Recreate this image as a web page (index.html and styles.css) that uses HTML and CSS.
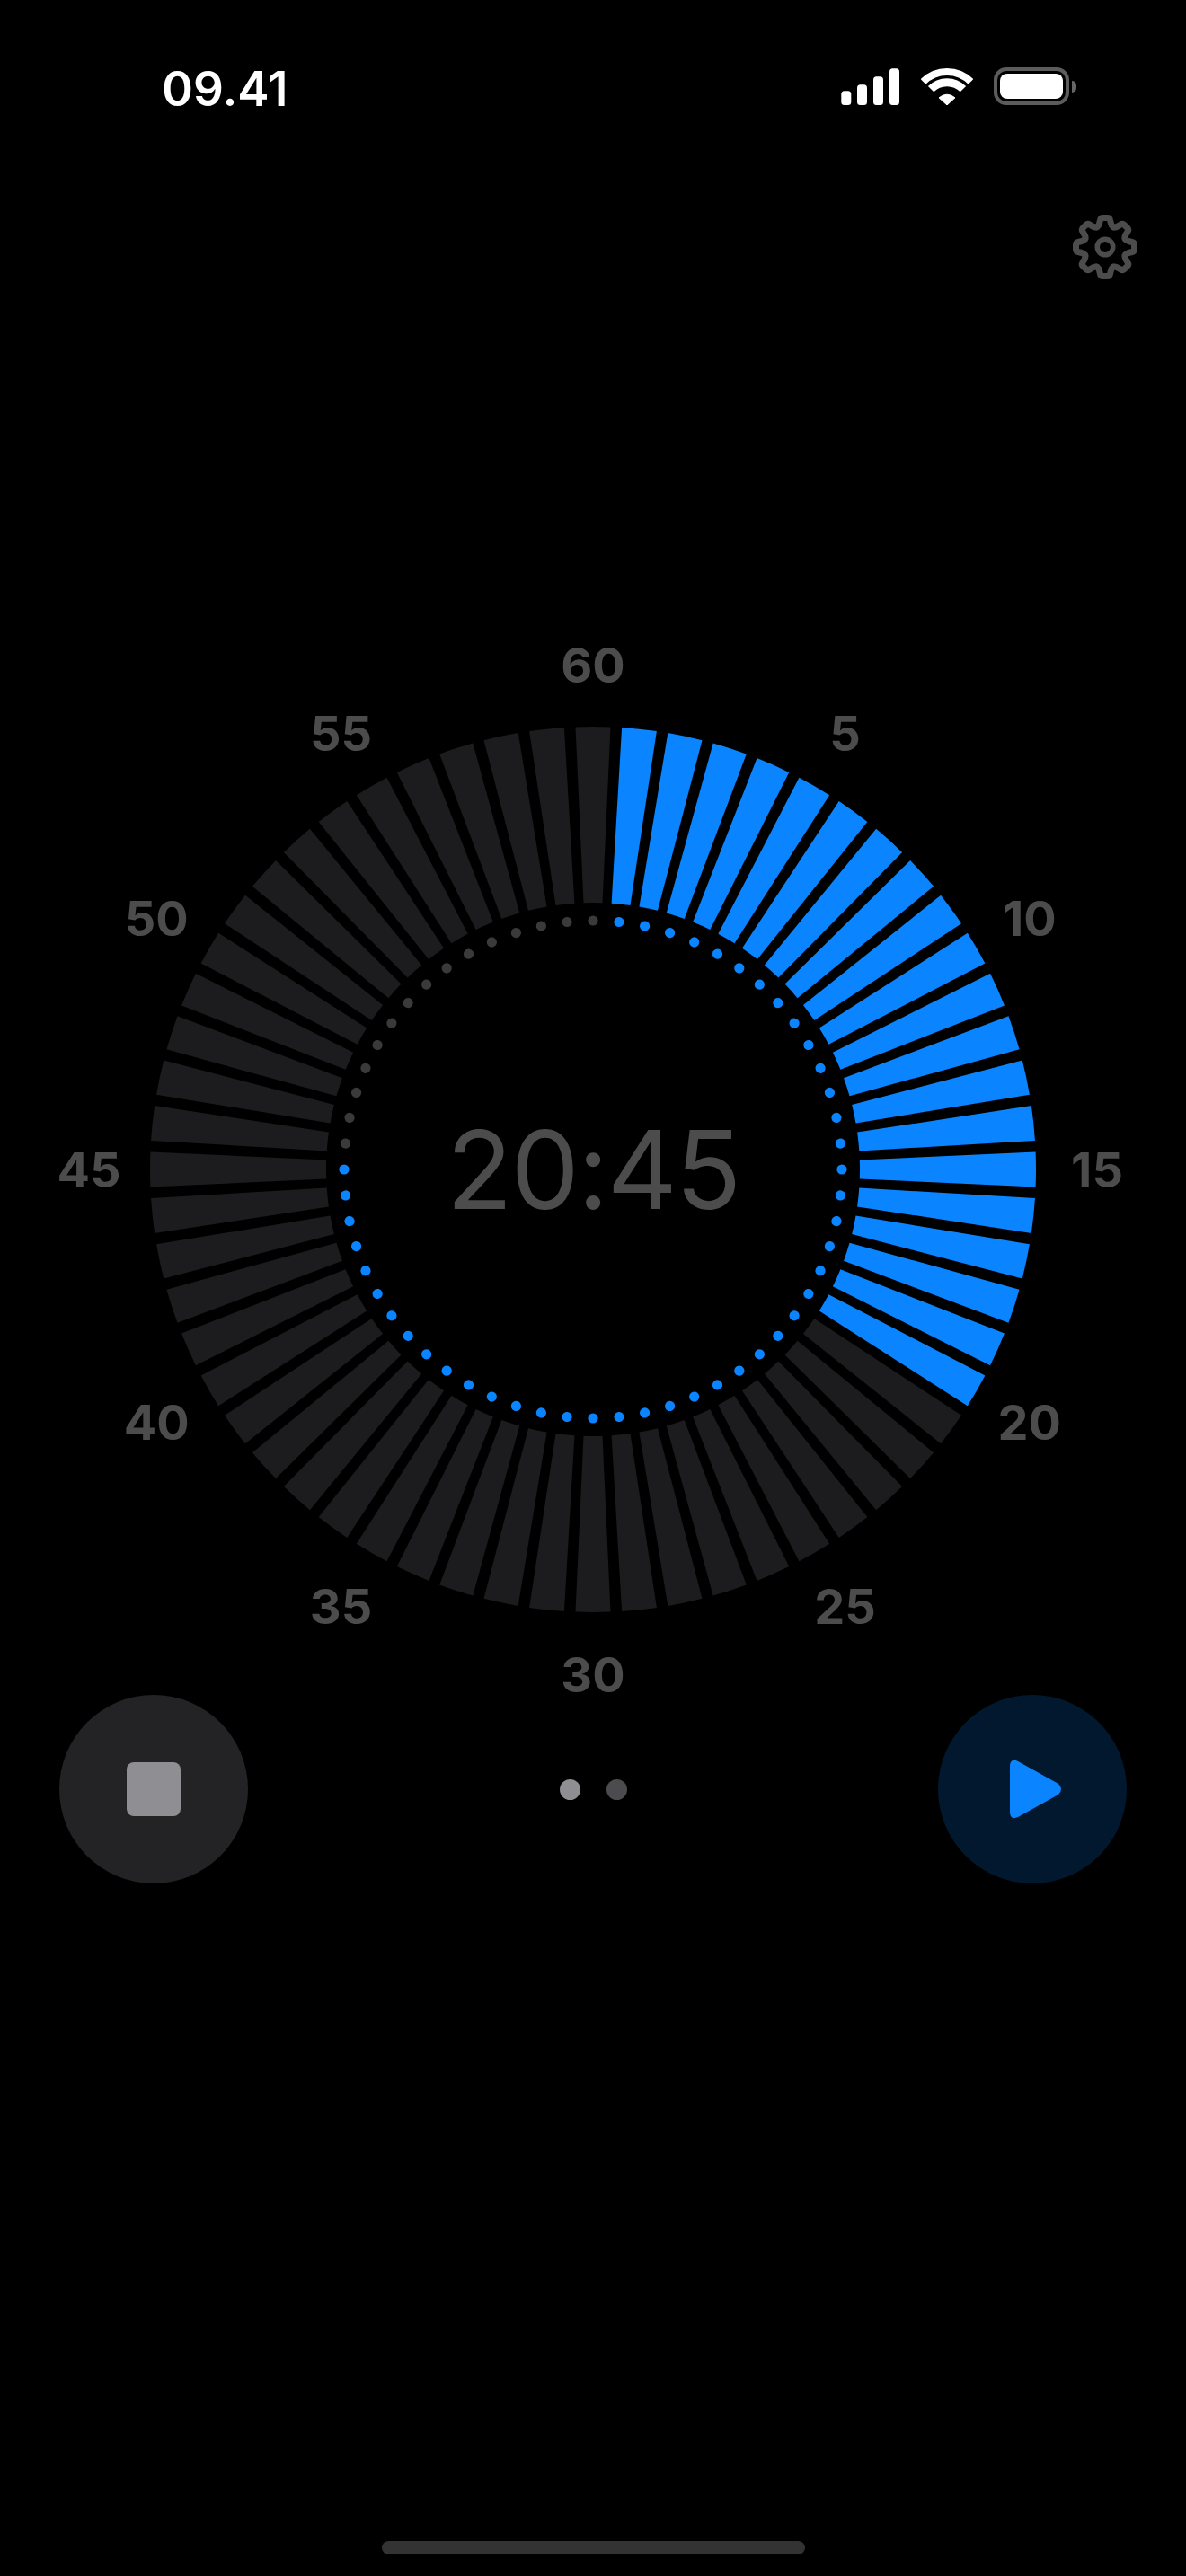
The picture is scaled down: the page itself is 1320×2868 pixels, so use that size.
FILE: index.html
```html
<!DOCTYPE html>
<html lang="en">
<head>
  <meta charset="UTF-8">
  <title>Timer</title>
  <link rel="stylesheet" href="styles.css">
</head>

<body>
  <div id="appContainer">
    <!-- Status bar -->
    <div class="statusBar">
      <div class="clock">09.41</div>
      <div class="statusIcons">
        <svg class="signalIcon" width="66" height="42" viewBox="0 0 66 42">
          <rect x="0.3" y="26.3" width="11" height="15.7" rx="3.5"/>
          <rect x="18" y="19.3" width="11" height="22.7" rx="3.5"/>
          <rect x="36" y="10.3" width="11" height="31.7" rx="3.5"/>
          <rect x="54" y="1.3" width="11" height="40.7" rx="3.5"/>
        </svg>
        <svg class="wifiIcon" width="58" height="42" viewBox="-29 -42 58 42">
          <path class="wifiArc" d="M-26.5 -26 A37.5 37.5 0 0 1 26.5 -26"/>
          <path class="wifiArc mid" d="M-17.9 -17.9 A25.3 25.3 0 0 1 17.9 -17.9"/>
          <path class="wifiDot" d="M0 0 L-9 -8.2 Q0 -15.4 9 -8.2 Z"/>
        </svg>
        <div class="battery">
          <div class="batteryBody"><div class="batteryFill"></div></div>
          <div class="batteryNub"></div>
        </div>
      </div>
    </div>

    <!-- Settings -->
    <div class="settingsRow">
      <svg class="gearIcon" width="80" height="80" viewBox="-40 -40 80 80">
        <defs>
          <path id="gearTooth" d="M-9.2 -22.2 Q-7 -23.5 -6.5 -26 L-5.5 -30 Q-5 -32.5 -2.5 -32.5 L2.5 -32.5 Q5 -32.5 5.5 -30 L6.5 -26 Q7 -23.5 9.2 -22.2"/>
        </defs>
        <use href="#gearTooth"/>
        <use href="#gearTooth" transform="rotate(45)"/>
        <use href="#gearTooth" transform="rotate(90)"/>
        <use href="#gearTooth" transform="rotate(135)"/>
        <use href="#gearTooth" transform="rotate(180)"/>
        <use href="#gearTooth" transform="rotate(225)"/>
        <use href="#gearTooth" transform="rotate(270)"/>
        <use href="#gearTooth" transform="rotate(315)"/>
        <circle class="gearHub" r="8.75"/>
      </svg>
    </div>

    <!-- Dial -->
    <svg class="dial" width="1320" height="1192" viewBox="-660 -596 1320 1192">
      <g id="minuteSegments"></g>
      <g id="secondDots"></g>
      <text class="tick" x="0" y="-542">60</text>
      <text class="tick" x="280.5" y="-466">5</text>
      <text class="tick" x="485.8" y="-260.5">10</text>
      <text class="tick" x="561" y="20">15</text>
      <text class="tick" x="485.8" y="300.5">20</text>
      <text class="tick" x="280.5" y="505.8">25</text>
      <text class="tick" x="0" y="582">30</text>
      <text class="tick" x="-280.5" y="505.8">35</text>
      <text class="tick" x="-485.8" y="300.5">40</text>
      <text class="tick" x="-561" y="20">45</text>
      <text class="tick" x="-485.8" y="-260.5">50</text>
      <text class="tick" x="-280.5" y="-466">55</text>
      <text class="timeLeft" x="0" y="44">20:45</text>
    </svg>

    <!-- Controls -->
    <div class="controls">
      <div class="roundBtn stopBtn"><div class="stopSquare"></div></div>
      <div class="pageDots">
        <div class="pageDot active"></div>
        <div class="pageDot"></div>
      </div>
      <div class="roundBtn playBtn">
        <svg class="playIcon" width="58" height="66" viewBox="0 0 58 66">
          <path d="M0 8 Q0 -2 9 2 L54 27 Q60 33 54 39 L9 64 Q0 68 0 58 Z"/>
        </svg>
      </div>
    </div>

    <div class="homeBar"></div>
  </div>

  <script src="dial.js"></script>
</body>
</html>
```

FILE: styles.css
```css
* { box-sizing: border-box; margin: 0; padding: 0; }
html, body {
  width: 100%;
  height: 100%;
  background: #000;
  font-family: Inter, "Liberation Sans", sans-serif;
  overflow: hidden;
}

#appContainer {
  display: flex;
  flex-direction: column;
  width: 1320px;
  height: 2868px;
}

/* Status bar */
.statusBar {
  display: flex;
  justify-content: space-between;
  align-items: flex-end;
  height: 120px;
  padding: 0 122px 3px 180px;
}

.clock {
  color: #fff;
  font-size: 53px;
  font-weight: 600;
  line-height: 53px;
  margin-bottom: -9px;
}

.statusIcons {
  display: flex;
  align-items: flex-end;
  gap: 23px;
}

.signalIcon rect { fill: #fff; }
.wifiArc { fill: none; stroke: #fff; stroke-width: 8; }
.wifiArc.mid { stroke-width: 9; }
.wifiDot { fill: #fff; stroke: #fff; stroke-width: 1; stroke-linejoin: round; }

.battery {
  display: flex;
  align-items: center;
  gap: 3px;
}

.batteryBody {
  width: 84px;
  height: 42px;
  padding: 3px;
  border: 4px solid #5c5c5c;
  border-radius: 14px;
}

.batteryFill {
  height: 100%;
  background: #fff;
  border-radius: 8px;
}

.batteryNub {
  width: 5px;
  height: 13px;
  background: #666;
  border-radius: 0 5px 5px 0;
}

/* Settings */
.settingsRow {
  display: flex;
  justify-content: flex-end;
  padding: 115px 50px 0 0;
}

.gearIcon use, .gearHub {
  fill: none;
  stroke: #4c4c4c;
  stroke-width: 7;
  stroke-linecap: round;
  stroke-linejoin: round;
}
.gearHub { stroke-width: 5.5; }

/* Dial */
.dial {
  display: block;
  margin-top: 391px;
}

.segment { fill: #1c1c1e; }
.segment.on { fill: #0a84ff; }
.secondDot { fill: #3a3a3c; }
.secondDot.on { fill: #0a84ff; }

.tick {
  fill: #4c4c4c;
  font-size: 54px;
  font-weight: 700;
  text-anchor: middle;
}

.timeLeft {
  fill: #4c4c4c;
  font-size: 121px;
  font-weight: 400;
  letter-spacing: -2px;
  text-anchor: middle;
}

/* Controls */
.controls {
  display: flex;
  justify-content: space-between;
  align-items: center;
  margin-top: -11px;
  padding: 0 66px;
}

.roundBtn {
  display: flex;
  justify-content: center;
  align-items: center;
  width: 210px;
  height: 210px;
  border-radius: 50%;
}

.stopBtn { background: #232325; }
.playBtn { background: #02182e; padding-left: 8px; }

.stopSquare {
  width: 60px;
  height: 60px;
  background: #8e8e93;
  border-radius: 8px;
}

.playIcon path { fill: #0a84ff; }

.pageDots {
  display: flex;
  gap: 29px;
}

.pageDot {
  width: 23px;
  height: 23px;
  background: #4c4c4e;
  border-radius: 50%;
}
.pageDot.active { background: #8e8e93; }

.homeBar {
  align-self: center;
  width: 471px;
  height: 15px;
  margin-top: auto;
  margin-bottom: 24px;
  background: #333;
  border-radius: 8px;
}
```

FILE: dial.js
```js
const NS = "http://www.w3.org/2000/svg";
const minutesOn = 20;
const secondsOn = 45;

// one wedge pointing up, rotated into place below
const outerR = 493, innerR = 297, outerW = 19.5, innerW = 10.5;
const yo = -Math.sqrt(outerR * outerR - outerW * outerW);
const yi = -Math.sqrt(innerR * innerR - innerW * innerW);
const wedge = `M${-innerW} ${yi} L${-outerW} ${yo} A${outerR} ${outerR} 0 0 1 ${outerW} ${yo} ` +
              `L${innerW} ${yi} A${innerR} ${innerR} 0 0 0 ${-innerW} ${yi} Z`;

const segments = document.getElementById("minuteSegments");
const dots = document.getElementById("secondDots");

for (let i = 0; i < 60; i++) {
  const seg = document.createElementNS(NS, "path");
  seg.setAttribute("d", wedge);
  seg.setAttribute("transform", `rotate(${i * 6})`);
  seg.setAttribute("class", i >= 1 && i <= minutesOn ? "segment on" : "segment");
  segments.appendChild(seg);

  const dot = document.createElementNS(NS, "circle");
  dot.setAttribute("cy", -277);
  dot.setAttribute("r", 5.6);
  dot.setAttribute("transform", `rotate(${i * 6})`);
  dot.setAttribute("class", i >= 1 && i <= secondsOn ? "secondDot on" : "secondDot");
  dots.appendChild(dot);
}
```
